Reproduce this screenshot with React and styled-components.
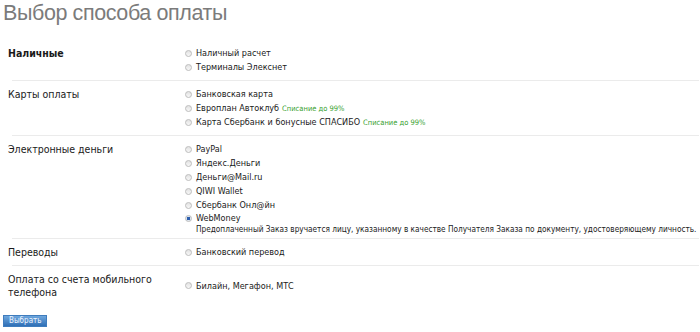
import React from 'react';
import styled, { createGlobalStyle } from 'styled-components';

const GlobalStyle = createGlobalStyle`
    body {
        margin: 0;
        background: #ffffff;
        font-family: "DejaVu Sans Condensed", "DejaVu Sans", Verdana, sans-serif;
        color: #000;
    }
`;

const groups = [
    {
        title: 'Наличные',
        bold: true,
        options: [{ label: 'Наличный расчет' }, { label: 'Терминалы Элекснет' }],
    },
    {
        title: 'Карты оплаты',
        options: [
            { label: 'Банковская карта' },
            { label: 'Европлан Автоклуб', note: 'Списание до 99%' },
            { label: 'Карта Сбербанк и бонусные СПАСИБО', note: 'Списание до 99%' },
        ],
    },
    {
        title: 'Электронные деньги',
        options: [
            { label: 'PayPal' },
            { label: 'Яндекс.Деньги' },
            { label: 'Деньги@Mail.ru' },
            { label: 'QIWI Wallet' },
            { label: 'Сбербанк Онл@йн' },
            {
                label: 'WebMoney',
                checked: true,
                hint: 'Предоплаченный Заказ вручается лицу, указанному в качестве Получателя Заказа по документу, удостоверяющему личность.',
            },
        ],
    },
    {
        title: 'Переводы',
        options: [{ label: 'Банковский перевод' }],
    },
    {
        title: 'Оплата со счета мобильного телефона',
        center: true,
        options: [{ label: 'Билайн, Мегафон, МТС' }],
    },
];

export default function App() {
    return (
        <>
            <GlobalStyle />
            <Title>Выбор способа оплаты</Title>
            <Form>
                { groups.map((group, i) => (
                    <Section key={ group.title } last={ i === groups.length - 1 } center={ group.center }>
                        <GroupName bold={ group.bold }>{ group.title }</GroupName>
                        <Options>
                            { group.options.map(option => (
                                <div key={ option.label }>
                                    <Option short={ !!option.hint }>
                                        <Radio checked={ option.checked } />
                                        <span>{ option.label }</span>
                                        { option.note && <Note>{ option.note }</Note> }
                                    </Option>
                                    { option.hint && <Hint>{ option.hint }</Hint> }
                                </div>
                            )) }
                        </Options>
                    </Section>
                )) }
                <Submit type="button">Выбрать</Submit>
            </Form>
        </>
    );
}

const Title = styled.h1`
    margin: 0;
    padding: 0 0 0 3px;
    height: 26px;
    font-family: "Liberation Sans", Arial, sans-serif;
    font-weight: normal;
    font-size: 21.5px;
    letter-spacing: -0.4px;
    line-height: 26px;
    color: #7b7b7b;
`;

const Form = styled.form`
    margin-top: 14px;
`;

const Section = styled.div`
    position: relative;
    display: grid;
    grid-template-columns: 177px 1fr;
    align-items: ${ props => props.center ? 'center' : 'start' };
    padding: 6px 0 6px 8px;
    border-bottom: 1px solid transparent;

    &::after {
        content: '';
        display: ${ props => props.last ? 'none' : 'block' };
        position: absolute;
        left: 12px;
        right: 1px;
        bottom: -1px;
        height: 1px;
        background: #ebebeb;
    }
`;

const GroupName = styled.div`
    font-size: 10.5px;
    line-height: 13px;
    padding-top: 1px;
    padding-right: 20px;
    font-weight: ${ props => props.bold ? 'bold' : 'normal' };
    color: #1a1a1a;
`;

const Options = styled.div`
    display: flex;
    flex-direction: column;
`;

const Option = styled.label`
    display: flex;
    align-items: center;
    height: ${ props => props.short ? '12px' : '14px' };
    font-size: 9px;
    color: #1a1a1a;
`;

const Radio = styled.span`
    box-sizing: border-box;
    width: 7px;
    height: 7px;
    margin-right: 4px;
    border-radius: 50%;
    border: 1px solid #bdbdbd;
    background: ${ props => props.checked
        ? 'radial-gradient(circle, #2d5fae 0 1.5px, #dde6f1 2px)'
        : 'linear-gradient(#e2e2e2, #f7f7f7)' };
    flex-shrink: 0;
`;

const Note = styled.span`
    margin-left: 3px;
    font-size: 7.5px;
    color: #37a12f;
`;

const Hint = styled.div`
    padding-left: 11px;
    margin-bottom: -3px;
    font-size: 8.2px;
    line-height: 11px;
    white-space: nowrap;
    color: #1a1a1a;
`;

const Submit = styled.button`
    display: block;
    margin: 9px 0 0 3px;
    padding: 0 5px;
    height: 12px;
    border: 1px solid #3f7cbd;
    background: linear-gradient(#6ea6dd, #2f6fb6);
    color: #eef5ff;
    font-family: "DejaVu Sans Condensed", "DejaVu Sans", Verdana, sans-serif;
    font-size: 8px;
    line-height: 10px;
    cursor: pointer;
`;
